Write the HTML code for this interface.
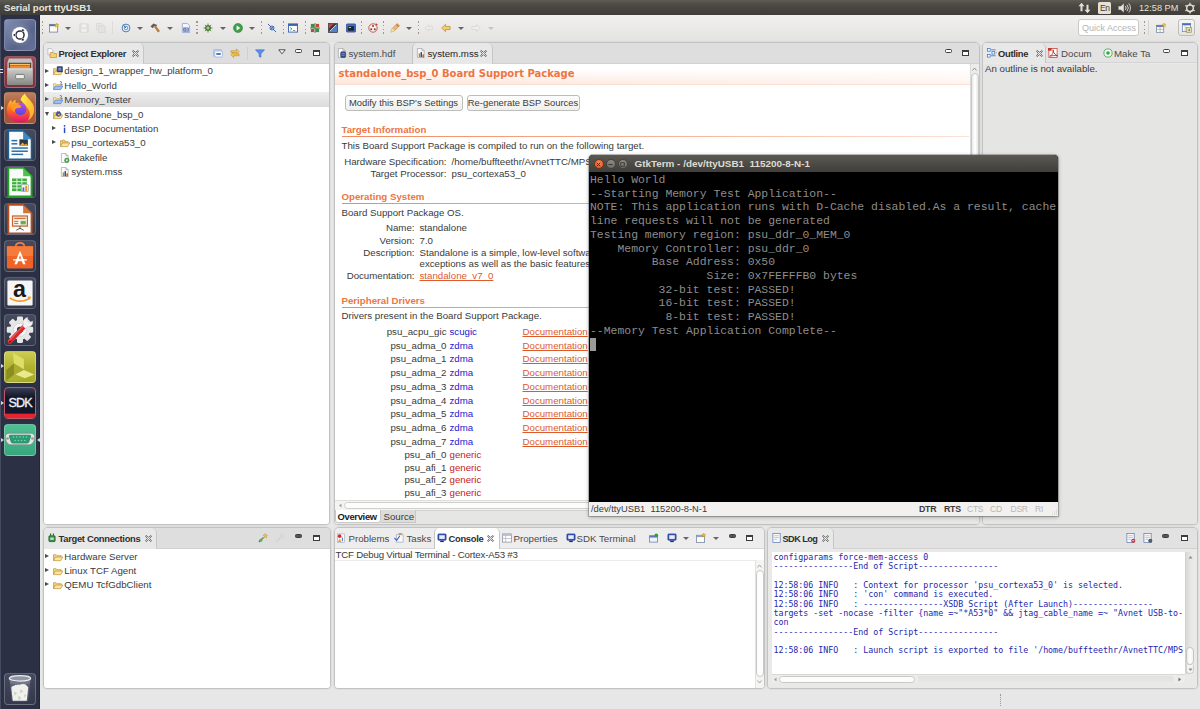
<!DOCTYPE html>
<html lang="en">
<head>
<meta charset="utf-8">
<title>Serial port ttyUSB1</title>
<style>
*{box-sizing:border-box;margin:0;padding:0}
html,body{width:1200px;height:709px;overflow:hidden}
body{position:relative;background:#e7e7e7;font-family:"Liberation Sans","DejaVu Sans",sans-serif;font-size:9.7px;color:#3a3a3a;line-height:1}
.abs{position:absolute}
.t{position:absolute;white-space:pre;line-height:12px;height:12px}
.b{font-weight:bold}
/* top panel */
#top{position:absolute;left:0;top:0;width:1200px;height:15px;background:linear-gradient(#5d5b54 0,#4a4944 35%,#3e3d39 100%);color:#e6e1d6}
#top .ttl{position:absolute;left:4px;top:1px;font-weight:bold;font-size:9.6px;line-height:13px;color:#e9e5db}
/* launcher */
#launcher{position:absolute;left:0;top:15px;width:40px;height:694px;background:#2b3044;border-right:1px solid #222738;border-left:1px solid #454b60}
.li{position:absolute;left:3px;width:32px;height:32px;border-radius:4px;border:1px solid rgba(255,255,255,.18);overflow:hidden}
/* panels */
.panel{position:absolute;border:1px solid #c2c2c2;border-radius:5px 5px 4px 4px;background:#e9e9e8;overflow:hidden;box-shadow:0 0 0 1px rgba(0,0,0,.035)}
.panel .body{position:absolute;left:0;right:0;bottom:0;background:#fff}
.tab{position:absolute;top:0;height:21px;background:#e8e8e8;border-right:1px solid #c6c6c6;border-radius:0 5px 0 0}

.hdr{position:absolute;left:0;top:0;right:0;height:21px;background:#dedede;border-bottom:1px solid #d1d1d1}
.tabtxt{position:absolute;top:4.5px;line-height:12px;white-space:pre;color:#4a4a4a}
.tabtxt.act{color:#2e2e2e;font-weight:bold;font-size:9.4px;letter-spacing:-.3px}
.row{position:absolute;left:0;right:0;height:14px}
.row .t{top:1px}
.tri{position:absolute;width:0;height:0}
.tri.r{border-left:4px solid #4a4a4a;border-top:2.5px solid transparent;border-bottom:2.5px solid transparent;margin:1px 0 0 -2px}
.tri.d{border-top:4px solid #4a4a4a;border-left:2.5px solid transparent;border-right:2.5px solid transparent;margin-left:-1px}
.ic{position:absolute;width:10px;height:10px}
.or{color:#ee7541}
.lnk{color:#dd5a2c;text-decoration:underline}
.bl{color:#2020cc}
.rd{color:#c8171f}
.sec{position:absolute;left:7px;font-weight:bold;color:#ee7541;font-size:9.7px;line-height:12px;white-space:pre}
.secline{position:absolute;left:7px;height:1px;background:linear-gradient(90deg,#f08a5d,#f5a988 40%,#fbe2d8)}
.btn{position:absolute;font-size:9.4px;height:16px;border:1px solid #bdbdbc;border-radius:3px;background:linear-gradient(#fdfdfd,#efefee);line-height:14px;text-align:center;color:#3a3a3a;white-space:pre}
.mm{position:absolute;top:6px}
.mini{position:absolute;width:7px;height:3.5px;border:1.2px solid #3c3c3c;border-radius:1.5px;background:#fff}
.maxi{position:absolute;width:7px;height:6.5px;margin:-.5px 0 0 .5px;border:1px solid #3c3c3c;border-top-width:2px;background:#fff}

.lab{position:absolute;white-space:pre;line-height:12px;text-align:right}
.val{position:absolute;white-space:pre;line-height:12px}
.sb{position:absolute;background:#f3f3f2;border:1px solid #c8c8c7;border-radius:4px}

.log{position:absolute;left:5.4px;white-space:pre;font-family:"DejaVu Sans Mono","Liberation Mono",monospace;font-size:8.3px;line-height:9.33px;color:#2626b0}

#gt{position:absolute;left:589px;top:155px;width:468.5px;height:360.5px;box-shadow:0 1px 4px rgba(0,0,0,.32),0 0 0 1px rgba(70,70,65,.3);border-radius:4px 4px 0 0;background:#000;overflow:hidden}
#gt .tb{position:absolute;left:0;top:0;right:0;height:17px;background:linear-gradient(#5b5952,#3f3e3a);border-radius:4px 4px 0 0}
#gt .tt{position:absolute;left:45.5px;top:2px;line-height:13px;font-weight:bold;font-size:9.9px;color:#dfdbd2;white-space:pre}
#gt .wb{position:absolute;top:4px;width:10px;height:10px;border-radius:50%}
#gt pre{position:absolute;left:1px;top:18px;font-family:"Liberation Mono","DejaVu Sans Mono",monospace;font-size:11.43px;line-height:13.7px;color:#8d8d8d;white-space:pre}
#gt .st{position:absolute;left:0;right:0;bottom:0;height:14px;background:#f2f1f0;color:#3c3c3c}
#gt .st span{position:absolute;top:1px;line-height:12px;white-space:pre}

.li svg{position:absolute;left:-1px;top:-1px;width:32px;height:32px}
.dk{background:linear-gradient(#454a5e,#33384b)}
.pip{position:absolute;left:0;width:0;height:0;border-left:3px solid #d8d8d8;border-top:2.5px solid transparent;border-bottom:2.5px solid transparent}

.tbi{position:absolute;top:23px;width:10px;height:10px;margin-left:.5px;opacity:.92}
.dd{position:absolute;top:26.5px;width:0;height:0;border-top:3.5px solid #666;border-left:3px solid transparent;border-right:3px solid transparent;margin-left:-.5px}
.dsep{position:absolute;top:20.5px;width:1.4px;height:13.5px;background:repeating-linear-gradient(#a5977a 0,#a5977a 1.7px,transparent 1.7px,transparent 3.8px)}
.pi{position:absolute;width:11px;height:11px}
#co .hdr{background:#ededed;border-bottom-color:#d6d6d6}
.row svg{width:10px!important;height:10px!important;margin:.5px 0 0 -.4px}
.row .t{margin-left:-.7px}
#ol .hdr{background:#e3e3e3;border-bottom-color:#d4d4d4;height:20px}
#ol .tab{height:20px}
#sl .hdr{background:#e2e2e2}
.panel>svg[viewBox="0 0 11 11"]{width:10px!important;height:10px!important;margin:.6px 0 0 .5px}
</style>
</head>
<body>
<div id="top"><div class="ttl">Serial port ttyUSB1</div>
<svg class="abs" style="left:1078px;top:2px;width:13px;height:12px" viewBox="0 0 13 12"><path d="M3.5 .8l3 3.400h-2v5h-2v-5h-2z" fill="#e6e1d6"/><path d="M9.5 11.200l-3-3.400h2v-5h2v5h2z" fill="#e6e1d6"/></svg>
<div class="abs" style="left:1098px;top:2px;width:13px;height:12px;background:#e6e1d6;border-radius:1.5px"></div>
<div class="t" style="left:1100px;top:2px;color:#3c3b37;font-size:8.5px;letter-spacing:-.3px">En</div>
<svg class="abs" style="left:1118px;top:2px;width:14px;height:12px" viewBox="0 0 14 12"><path d="M.5 4.200h2.300l3-2.700v9l-3-2.700h-2.300z" fill="#e6e1d6"/><path d="M7.300 4a3 3 0 0 1 0 4M9 2.800a5 5 0 0 1 0 6.400M10.800 1.5a7 7 0 0 1 0 9" fill="none" stroke="#e6e1d6" stroke-width=".9"/></svg>
<div class="t" style="left:1139px;top:2px;color:#e6e1d6;font-size:9.2px">12:58 PM</div>
<svg class="abs" style="left:1184px;top:2px;width:12px;height:12px" viewBox="0 0 12 12"><g transform="translate(6 6.200)" stroke="#e6e1d6" fill="none"><circle r="3.300" stroke-width="1.400"/><path d="M0-5.5v3" stroke-width="1.300"/><g stroke-width="1.5"><path d="M-4.600-2.700l1.200.7M4.600-2.700l-1.200.7M-4.600 2.700l1.200-.7M4.600 2.700l-1.200-.7M0 5.300v-1.400"/></g></g></svg>
</div>
<div id="launcher">
<div class="li" style="top:3.7px;background:radial-gradient(circle at 50% 50%,rgba(255,255,255,.18) 0,rgba(255,255,255,.06) 45%,rgba(255,255,255,0) 60%),linear-gradient(135deg,#838fb3,#58648a 60%,#66729a)"><svg viewBox="0 0 33 33"><circle cx="16.5" cy="16.5" r="8.3" fill="#fff"/><circle cx="16.5" cy="16.5" r="4.2" fill="none" stroke="#2c2c3a" stroke-width="1.5"/><circle cx="10.8" cy="16.5" r="1.4" fill="#2c2c3a" stroke="#fff" stroke-width=".5"/><circle cx="19.4" cy="11.6" r="1.4" fill="#2c2c3a" stroke="#fff" stroke-width=".5"/><circle cx="19.4" cy="21.4" r="1.4" fill="#2c2c3a" stroke="#fff" stroke-width=".5"/></svg></div>
<div class="li" style="top:40.6px;background:linear-gradient(#9e4c56,#883a44 40%,#80323c)"><svg viewBox="0 0 33 33"><defs><linearGradient id="cab" x1="0" y1="0" x2="0" y2="1"><stop offset="0" stop-color="#cdcdcb"/><stop offset="1" stop-color="#868684"/></linearGradient></defs><path d="M5 2.5h23l1.5 4.5v21.5a1.5 1.5 0 0 1-1.5 1.5h-23a1.5 1.5 0 0 1-1.5-1.5v-21.5z" fill="#c2c2c0"/><rect x="5" y="7" width="23" height="6" fill="#3a3632"/><rect x="6" y="8" width="21" height="1.600" fill="#fbbf6a"/><rect x="6" y="9.800" width="21" height="3" fill="#f08a2c"/><rect x="3.5" y="12.800" width="26" height="17.2" rx="1.5" fill="url(#cab)"/><rect x="3.5" y="12.800" width="26" height="1" fill="#e2e2e0"/><rect x="12" y="19" width="9" height="4.5" rx="1" fill="#ececea" stroke="#6e6e6c" stroke-width=".9"/></svg></div>
<div class="li" style="top:77.4px;background:linear-gradient(#bd7e5e,#aa5c3a 45%,#a25636)"><svg viewBox="0 0 33 33"><defs><linearGradient id="ffA" x1="0" y1="0" x2="0" y2="1"><stop offset="0" stop-color="#ffc42e"/><stop offset=".45" stop-color="#ff6a22"/><stop offset="1" stop-color="#e30f73"/></linearGradient><linearGradient id="ffB" x1="0" y1="0" x2="0" y2="1"><stop offset="0" stop-color="#c04af0"/><stop offset="1" stop-color="#4a4ae0"/></linearGradient><linearGradient id="ffC" x1="0" y1="0" x2="1" y2="1"><stop offset="0" stop-color="#fff24a"/><stop offset="1" stop-color="#ffa62a"/></linearGradient></defs><path d="M16.5 31.5c-8 0-13.5-6-13.5-13 0-5.5 2.5-9 4.5-10.5 0 1.5.5 2.5 1 3 1-2 3-3 4-3-1 1-1 2.5 0 3.5 3-1.5 6 .5 8 3l9-3c1 2.5 1.5 5 1.5 7 0 7-6 13-14.5 13z" fill="url(#ffA)"/><path d="M17 8c1-3 3-5 4.5-6.5 1 3 3 4 5 6.5 2.5 3 4.5 6 4.5 10.5 0 5-3 9-6.5 11 3-4 3-10-1-14-2-2-4.5-5.5-6.5-7.5z" fill="url(#ffC)"/><circle cx="17" cy="17.5" r="6.2" fill="url(#ffB)"/><path d="M6.5 14c3-2.2 7.5-2.2 10.5-.2 1.5 1 0 2.700-2 2.700-3 0-4.5 2-4 4.5-2-1-4-3.5-4.5-7z" fill="#ff9a1e"/></svg></div>
<div class="li dk" style="top:114.3px;"><svg viewBox="0 0 33 33"><g transform="translate(-4.8 -1.3) scale(1.09)"><path d="M8.5 3h14l8 8v19h-22z" fill="#fbfbfb" stroke="#1f5f8f" stroke-width="1.600"/><path d="M22.5 3l8 8h-8z" fill="#3a8ac4"/><rect x="19" y="11" width="8" height="6" fill="#2a3a4a"/><path d="M19 17l3-3 2 2 1.5-1 1.5 2z" fill="#e8a82a"/><rect x="11.5" y="11.5" width="5.5" height="1.400" fill="#2a6fa8"/><rect x="11.5" y="14.5" width="5.5" height="1.400" fill="#2a6fa8"/><rect x="11.5" y="18.5" width="15.5" height="1.400" fill="#2a6fa8"/><rect x="11.5" y="21.5" width="15.5" height="1.400" fill="#2a6fa8"/><rect x="11.5" y="24.5" width="11" height="1.400" fill="#2a6fa8"/></g></svg></div>
<div class="li dk" style="top:151.2px;"><svg viewBox="0 0 33 33"><g transform="translate(-4.8 -1.3) scale(1.09)"><path d="M8.5 3h14l8 8v19h-22z" fill="#fbfbfb" stroke="#22a022" stroke-width="1.800"/><path d="M22.5 3l8 8h-8z" fill="#4cc44c"/><rect x="12" y="13" width="14" height="12" fill="#3cb03c"/><path d="M12 16h14M12 19h14M12 22h14M16.600 13v12M21.300 13v12" stroke="#eaf8ea" stroke-width=".9"/><rect x="21" y="19" width="6.5" height="6.5" fill="#f4f4f4" stroke="#888" stroke-width=".5"/><rect x="22" y="21.5" width="1.600" height="3.5" fill="#2a6fd0"/><rect x="24.5" y="20" width="1.800" height="5" fill="#f0902a"/></g></svg></div>
<div class="li dk" style="top:188.0px;"><svg viewBox="0 0 33 33"><g transform="translate(-4.8 -1.3) scale(1.09)"><path d="M8.5 3h14l8 8v19h-22z" fill="#fbfbfb" stroke="#b4501c" stroke-width="1.800"/><path d="M22.5 3l8 8h-8z" fill="#d8763a"/><rect x="12.5" y="13.5" width="14" height="9.5" fill="#fff" stroke="#c8622a" stroke-width="1.200"/><rect x="14" y="15" width="11" height="1.5" fill="#d8763a"/><rect x="14" y="18" width="4" height="1.200" fill="#d8763a"/><rect x="14" y="20" width="4" height="1.200" fill="#d8763a"/><rect x="20" y="18" width="5" height="3.5" fill="#6ab04a"/><path d="M19.5 23v3M16 27l3.5-2 3.5 2" stroke="#555" stroke-width=".9" fill="none"/></g></svg></div>
<div class="li dk" style="top:224.9px;"><svg viewBox="0 0 33 33"><path d="M12 7c0-5.5 9-5.5 9 0" fill="none" stroke="#ee7b45" stroke-width="1.800"/><path d="M3 6.5h27v21.5a1.5 1.5 0 0 1-1.5 1.5h-24a1.5 1.5 0 0 1-1.5-1.5z" fill="#ef6426"/><path d="M3 6.5h27v10h-27z" fill="#f37b3b"/><path d="M16.5 11l5.800 14h-2.700l-1.200-3h-3.800l-1.200 3h-2.700zm0 4.5l-1.200 3.800h2.400z" fill="#fff"/><rect x="9.5" y="19.800" width="14" height="1.400" fill="#fff"/></svg></div>
<div class="li dk" style="top:261.8px;"><svg viewBox="0 0 33 33"><rect x="3.5" y="3.5" width="26" height="26" rx="1.5" fill="#f6f6f6"/><text x="16" y="20.5" text-anchor="middle" font-family="Liberation Sans,sans-serif" font-weight="bold" font-size="24" fill="#1a1a1a">a</text><path d="M6 21.5c6 4.5 15 4.5 21 0" fill="none" stroke="#f79a1e" stroke-width="1.700"/><path d="M24 20.300l3.800-.3-1 3.5z" fill="#f79a1e"/></svg></div>
<div class="li dk" style="top:298.7px;"><svg viewBox="0 0 33 33"><g transform="translate(16.5 16.3)"><g fill="#e6e6e6"><circle r="10.3"/><rect id="gth" x="-3.1" y="-13.6" width="6.2" height="27.2" rx="1.2"/><use href="#gth" transform="rotate(45)"/><use href="#gth" transform="rotate(90)"/><use href="#gth" transform="rotate(135)"/></g><circle r="6.8" fill="#f6f6f6" stroke="#d2d2d2" stroke-width=".8"/><circle r="3.2" fill="#30354a"/></g><path d="M6 28.5l16.5-17.5" stroke="#d9282c" stroke-width="4.6" stroke-linecap="round"/><path d="M6 28.5l16.5-17.5" stroke="#f0605a" stroke-width="1.2" stroke-linecap="round" transform="translate(-.9 -.9)"/><circle cx="6.2" cy="28.3" r="1" fill="#6e0e10"/><path d="M20 10.5c-1-3 1-6.5 4.5-7l-.5 3.5 2.5 2 3-1.8c.8 3.5-2 6.5-5 6l-2 2-3-2.700z" fill="#f2f2f2" stroke="#c8c8c8" stroke-width=".5"/></svg></div>
<div class="li" style="top:335.5px;background:linear-gradient(#cccd52,#b0b22e 50%,#a6a828);border-color:rgba(255,255,255,.3)"><svg viewBox="0 0 33 33"><path d="M9.200 2.100l11.300 6.200v10.800l-10.200-6.200z" fill="#dcde68"/><path d="M2.400 19.600l7.900-6.700v11.300l-7.900 6.700z" fill="#8b8e1e"/><path d="M10.300 12.900l10.200 6.200v.5l-9 4.600h-1.200z" fill="#a9ac30"/><path d="M11.500 24.200l9-4.600 10.700 4.600-9.600 3.900z" fill="#e9ea8c"/><path d="M2.400 30.900l7.900-6.700h1.200l10.100 3.900-8 3z" fill="#b4b63a" opacity=".55"/></svg></div>
<div class="li" style="top:372.4px;background:linear-gradient(#3a3e55 0,#14172a 30%,#14172a 100%);border-color:#c2576a"><svg viewBox="0 0 33 33"><rect x="0" y="27.5" width="33" height="5.5" fill="#e8242e"/><text x="16.7" y="20.4" text-anchor="middle" font-family="Liberation Sans,sans-serif" font-size="13" letter-spacing="-.8" fill="#f2f2f2" stroke="#f2f2f2" stroke-width=".35">SDK</text></svg></div>
<div class="li" style="top:409.3px;background:linear-gradient(#4fbf94,#38a67c);border-color:rgba(255,255,255,.25)"><svg viewBox="0 0 33 33"><g transform="translate(-2 0) scale(1.12 1)"><path d="M3 12.5c0-2 2-3 4-3h19c2 0 4 1 4 3v1c0 4-2 8-5 8h-17c-3 0-5-4-5-8z" fill="#e4e4e2" stroke="#8a8a88" stroke-width=".8"/><path d="M8 11h17c1.5 0 2 1 1.700 2l-1.700 5.5c-.3 1-1 1.5-2 1.5h-13c-1 0-1.700-.5-2-1.5l-1.700-5.5c-.3-1 .2-2 1.700-2z" fill="#2a9a72"/><g fill="#7ad0b0"><circle cx="10.5" cy="13.5" r=".8"/><circle cx="13.5" cy="13.5" r=".8"/><circle cx="16.5" cy="13.5" r=".8"/><circle cx="19.5" cy="13.5" r=".8"/><circle cx="22.5" cy="13.5" r=".8"/><circle cx="12" cy="17" r=".8"/><circle cx="15" cy="17" r=".8"/><circle cx="18" cy="17" r=".8"/><circle cx="21" cy="17" r=".8"/></g><circle cx="5" cy="15" r="1.300" fill="#9a9a98"/><circle cx="28" cy="15" r="1.300" fill="#9a9a98"/></g></svg></div>
<div class="li dk" style="top:658px;border-color:rgba(255,255,255,.22)"><svg viewBox="0 0 33 33"><path d="M5.5 5h22l-2.5 23a2 2 0 0 1-2 1.5h-13a2 2 0 0 1-2-1.5z" fill="#7a8092" opacity=".5"/><path d="M7.5 15c1-2.5 3-1 4-3 1.5 1.5 3-1.5 4.5.5 1.5-2 3.5-.5 4.5-1.5 1.5.5 3 1.5 4.5 4l-1.5 13.5h-14.5z" fill="#f0f0ec"/><path d="M10 19l3.5 1.5-2.5 3zM17 16.5l3 2.5-3.5 2zM14.5 23.5l3.5 2-3 2.5zM20.5 22l2.5 1-2 2.5z" fill="#cfcfc9"/><path d="M5.5 5h22l-.6 5.5c-6 2-14 2-20.8 0z" fill="#9aa0b0" opacity=".35"/><ellipse cx="16.5" cy="5.5" rx="11" ry="2.8" fill="#9096a6" stroke="#ececec" stroke-width="1.3"/></svg></div>
<i class="pip" style="top:90.9px"></i><i class="pip" style="top:349.0px"></i><i class="pip" style="top:385.9px"></i><i class="pip" style="top:422.8px"></i><i class="pip" style="top:422.8px;left:36px;border-left:0;border-right:3px solid #d8d8d8"></i><div class="abs" style="left:-1px;top:54px;width:3px;height:1.3px;background:#ddd"></div><div class="abs" style="left:-1px;top:56.8px;width:3px;height:1.3px;background:#ddd"></div></div>

<!-- toolbar -->
<div class="abs" style="left:40px;top:15px;width:1160px;height:27px;background:linear-gradient(#f1f0ee,#e3e3e2)"></div>
<i class="dsep" style="left:42.0px"></i>
<svg class="tbi" style="left:48.0px;" viewBox="0 0 11 11"><rect x=".5" y="1.5" width="9" height="8.5" fill="#fdfdf4" stroke="#6a7a9a" stroke-width=".9"/><rect x=".5" y="1.5" width="9" height="2" fill="#4a6ab0"/><path d="M8.5 0l.8 1.600 1.700.3-1.200 1.200.3 1.700-1.600-.8-1.5.8.300-1.700-1.200-1.200 1.700-.3z" fill="#f4c430" stroke="#b8860b" stroke-width=".4"/></svg>
<i class="dd" style="left:65.5px"></i>
<svg class="tbi" style="left:78.2px;" viewBox="0 0 11 11"><path d="M1 1h8l1 1v8h-9z" fill="#e2e2e2" stroke="#cfcfcf" stroke-width=".8"/><rect x="3" y="1.5" width="5" height="3" fill="#f2f2f2"/><rect x="2.5" y="6.5" width="6" height="3.5" fill="#efefef"/></svg>
<svg class="tbi" style="left:95.3px;" viewBox="0 0 11 11"><path d="M.5 .5h6l1 1v6h-7z" fill="#e6e6e6" stroke="#d2d2d2" stroke-width=".7"/><path d="M3 3h6l1 1v6.5h-7z" fill="#e2e2e2" stroke="#cfcfcf" stroke-width=".7"/></svg>
<div class="abs" style="left:112px;top:21px;width:1px;height:13px;background:#dcdcdb"></div>
<svg class="tbi" style="left:120.3px;" viewBox="0 0 11 11"><circle cx="5.5" cy="5.5" r="4.300" fill="#eef4fb" stroke="#3c78b4" stroke-width="1.100"/><circle cx="5.5" cy="5.5" r="2" fill="none" stroke="#3c78b4" stroke-width=".9"/><path d="M5.5 5.5l-3-3.5" stroke="#2a5a94" stroke-width="1"/></svg>
<i class="dd" style="left:137.8px"></i>
<svg class="tbi" style="left:149.8px;" viewBox="0 0 11 11"><path d="M.5 3.800l3.200-3.300 4.300 1.700-1.300 1.700-1.700-.5-2 2.400z" fill="#555"/><path d="M4.300 4.200l2-1.500 4.700 6-2.200 1.800z" fill="#b8722e"/></svg>
<i class="dd" style="left:167.8px"></i>
<svg class="tbi" style="left:180.3px;" viewBox="0 0 11 11"><path d="M1.5 .5h5.5l2.5 2.5v7.5h-8z" fill="#f4f8ff" stroke="#7a96c8" stroke-width=".8"/><rect x="2.5" y="5" width="6" height="4.5" fill="#3a5aa8"/><path d="M4 6v2.5M5.5 6v2.5h1.5v-2.5z" stroke="#fff" stroke-width=".6" fill="none"/></svg>
<i class="dsep" style="left:196.3px"></i>
<svg class="tbi" style="left:202.0px;" viewBox="0 0 11 11"><circle cx="5.5" cy="5.5" r="2.800" fill="#5a9a3a" stroke="#2f5a24" stroke-width=".8"/><path d="M5.5 .5v10M.5 5.5h10M2 2l7 7M9 2l-7 7" stroke="#2f5a24" stroke-width=".8"/><circle cx="5.5" cy="5.5" r="1.600" fill="#8fd06a"/></svg>
<i class="dd" style="left:220.0px"></i>
<svg class="tbi" style="left:232.0px;" viewBox="0 0 11 11"><circle cx="5.5" cy="5.5" r="5" fill="#2f9a3a" stroke="#1f7a2a" stroke-width=".6"/><path d="M4 2.800l4 2.700-4 2.700z" fill="#fff"/></svg>
<i class="dd" style="left:249.5px"></i>
<i class="dsep" style="left:260.5px"></i>
<svg class="tbi" style="left:266.5px;" viewBox="0 0 11 11"><path d="M1 1l9 9" stroke="#3a5aa8" stroke-width="1.1"/><circle cx="5.5" cy="5.5" r="2.3" fill="#6aa2dc" stroke="#2a4a98" stroke-width=".7"/><path d="M3.5 7.5l4-4" stroke="#2a4a98" stroke-width=".6"/></svg>
<i class="dsep" style="left:282.5px"></i>
<svg class="tbi" style="left:287.5px;" viewBox="0 0 11 11"><rect x=".5" y="1" width="10" height="9" fill="#fff" stroke="#2a5aa0" stroke-width="1"/><rect x=".5" y="1" width="10" height="2.200" fill="#2a5aa0"/><path d="M2.5 5l1.800 1.5-1.800 1.5" stroke="#2a5aa0" stroke-width=".9" fill="none"/><path d="M5.5 8.300h2.5" stroke="#2a5aa0" stroke-width=".8"/></svg>
<i class="dsep" style="left:304.5px"></i>
<svg class="tbi" style="left:309.5px;" viewBox="0 0 11 11"><rect x="1" y="1" width="4" height="4" fill="#2a8a3a"/><rect x="6" y="6" width="4" height="4" fill="#2a8a3a"/><rect x="6.5" y="1" width="3.5" height="3.5" fill="#c0392b"/><rect x="1" y="6.5" width="3.5" height="3.5" fill="#c0392b"/><path d="M0 5.5h11M5.5 0v11" stroke="#1a5a2a" stroke-width=".8"/></svg>
<svg class="tbi" style="left:327.0px;" viewBox="0 0 11 11"><rect x=".5" y=".5" width="10" height="10" fill="#2a2a3a" stroke="#1a1a2a" stroke-width=".6"/><path d="M1 10l9-9v9z" fill="#4a78c8"/><path d="M1 1h5l-5 5z" fill="#c0392b"/><path d="M2 9l7-7" stroke="#eee" stroke-width=".9"/></svg>
<svg class="tbi" style="left:345.2px;" viewBox="0 0 11 11"><rect x=".5" y="1" width="10" height="9" rx="1" fill="#2a6ad0" stroke="#1a3a80" stroke-width=".8"/><rect x="2" y="3.5" width="7" height="5" fill="#10141c"/><rect x="3" y="4.5" width="2.5" height=".9" fill="#ddd"/></svg>
<i class="dsep" style="left:361.0px"></i>
<svg class="tbi" style="left:367.0px;" viewBox="0 0 11 11"><circle cx="5.5" cy="5.5" r="4.600" fill="#fdf2f2" stroke="#c0392b" stroke-width="1"/><circle cx="5.5" cy="3.300" r="1.100" fill="#7a2a2a"/><circle cx="3.600" cy="6.800" r="1.100" fill="#7a2a2a"/><circle cx="7.400" cy="6.800" r="1.100" fill="#7a2a2a"/><path d="M8.5 0l2.5 2-2.5 1z" fill="#c0392b"/></svg>
<i class="dsep" style="left:383.0px"></i>
<svg class="tbi" style="left:389.0px;" viewBox="0 0 11 11"><path d="M1 10l1.5-4 5.5-5.5 2.5 2.5-5.5 5.5z" fill="#e8b86a" stroke="#a8782a" stroke-width=".6"/><path d="M1 10l1.5-4 2.5 2.5z" fill="#f4e2b8"/><path d="M7 1.5l2.5 2.5" stroke="#c8641e" stroke-width="1.200"/></svg>
<i class="dd" style="left:406.5px"></i>
<i class="dsep" style="left:417.5px"></i>
<svg class="tbi" style="left:423.2px;" viewBox="0 0 11 11"><path d="M1 5.5l4-3.5v2h4.5v3h-4.5v2z" fill="#ececec" stroke="#d4d4d4" stroke-width=".7"/><path d="M8 1l.6 1.200 1.300.2-1 .9.300 1.300-1.200-.7" fill="#e0e0e0"/></svg>
<svg class="tbi" style="left:440.5px;" viewBox="0 0 11 11"><path d="M.8 5.5l4.200-4v2.300h5v3.400h-5v2.300z" fill="#f6cf5a" stroke="#b8862a" stroke-width=".8"/></svg>
<i class="dd" style="left:458.5px"></i>
<svg class="tbi" style="left:470.5px;" viewBox="0 0 11 11"><path d="M10.200 5.5l-4.200-4v2.300h-5v3.400h5v2.300z" fill="#efefef" stroke="#d2d2d2" stroke-width=".8"/></svg>
<i class="dd" style="left:488.5px;border-top-color:#c4c4c4"></i>
<div class="abs" style="left:1078px;top:19px;width:61px;height:17px;background:#fff;border:1px solid #c9c9c8;border-radius:3px"></div>
<div class="t" style="left:1082px;top:22px;color:#b4b4b4;font-size:9px">Quick Access</div>
<i class="dsep" style="left:1144.0px"></i>
<div class="abs" style="left:1148px;top:20px;width:1px;height:15px;background:#d4d4d3"></div>
<svg class="tbi" style="left:1155.0px;" viewBox="0 0 11 11"><rect x=".5" y="2.5" width="8" height="8" fill="#fdfdf0" stroke="#6a7a9a" stroke-width=".8"/><rect x=".5" y="2.5" width="8" height="1.800" fill="#4a6ab0"/><path d="M4.5 4.300v6M.5 7h8" stroke="#8a9ab8" stroke-width=".7"/><path d="M8.800 0l.7 1.400 1.5.2-1.100 1 .3 1.5-1.400-.7-1.300.7.300-1.5-1.100-1 1.5-.2z" fill="#f4c430" stroke="#b8860b" stroke-width=".4"/></svg>
<div class="abs" style="left:1178px;top:19px;width:17px;height:17px;border:1px solid #bdbdbc;border-radius:3px;background:linear-gradient(#f6f6f5,#e4e4e3)"></div>
<svg class="tbi" style="left:1181.0px;" viewBox="0 0 11 11"><rect x=".5" y=".5" width="9" height="9" fill="#fff" stroke="#5a7ab0" stroke-width=".8"/><rect x=".5" y=".5" width="9" height="2" fill="#3a62b0"/><path d="M3.5 2.5v7" stroke="#8a9ab8" stroke-width=".7"/><rect x="5" y="5" width="5.5" height="5.5" fill="#e8d8a0" stroke="#8a7a3a" stroke-width=".6"/><path d="M6.5 7.800l2-1.300v2.600z" fill="#2a5ab0"/></svg>
<!-- Project Explorer -->
<div class="panel" id="pe" style="left:43px;top:42px;width:287px;height:483px">
  <div class="hdr"></div>
  <div class="tab" style="left:0;width:100px"></div>
  <div class="tabtxt act" style="left:14.5px">Project Explorer</div>
  <svg class="abs" style="left:87.5px;top:6.7px;width:7px;height:7px" viewBox="0 0 8 8"><path d="M1.300 .5l2.700 2.200 2.700-2.200.8.800-2.200 2.700 2.200 2.700-.8.800-2.700-2.200-2.700 2.200-.8-.8 2.200-2.700-2.200-2.700z" fill="#f4f4f4" stroke="#3c3c3c" stroke-width=".8"/></svg>
  <svg class="abs" style="left:2px;top:4px;width:11px;height:11px" viewBox="0 0 11 11"><path d="M1 .5h3.5l2 2v5h-5.5z" fill="#fbfbfb" stroke="#a8a8b8" stroke-width=".7"/><path d="M3.5 5h3l1 1h3v4.5h-7z" fill="#f7d070" stroke="#b88a2a" stroke-width=".7"/></svg>
  <svg class="abs" style="left:169px;top:6px;width:10px;height:9px" viewBox="0 0 10 9"><rect x=".5" y=".5" width="8" height="7" rx="1" fill="#c4d8f4" stroke="#9ab4e0" stroke-width=".7"/><rect x="1.8" y="2" width="7.5" height="6" rx=".8" fill="#fff" stroke="#8aa8dc" stroke-width=".7"/><path d="M3.3 5h4.5" stroke="#2a4a98" stroke-width="1.3"/></svg>
  <svg class="abs" style="left:185px;top:4.5px;width:11px;height:11px" viewBox="0 0 11 11"><path d="M1 3h6v-2l3 3-3 3v-2h-6z" fill="#f4c84a" stroke="#b8862a" stroke-width=".6"/><path d="M10 8h-6v-2l-3 3 3 3v-2h6z" fill="#f4c84a" stroke="#b8862a" stroke-width=".6" transform="translate(0 -1.5)"/></svg>
  <div class="abs" style="left:203px;top:4px;width:1px;height:13px;background:#d0d0cf"></div>
  <svg class="abs" style="left:210.5px;top:6px;width:10px;height:9px" viewBox="0 0 10 9"><path d="M.5 .8h9l-3.6 4v3.5l-1.800-.8v-2.700z" fill="#5a8ee8" stroke="#3a6ad0" stroke-width=".6"/></svg>
  <svg class="abs" style="left:234px;top:6px;width:8px;height:6px" viewBox="0 0 8 6"><path d="M.8 .8h6.400l-3.200 4z" fill="#fff" stroke="#3c3c3c" stroke-width=".9"/></svg>
  <div class="mini" style="left:251px;top:6px"></div>
  <div class="maxi" style="left:268px;top:7px"></div>
  <div class="body" style="top:21px">
    <div class="row" style="top:0"><i class="tri r" style="left:3px;top:4px"></i><svg class="abs" style="left:9px;top:1.5px;width:11px;height:11px" viewBox="0 0 11 11"><path d="M.5 9.5v-6.5h3l1 1h4.5v1.5" fill="#f4d488" stroke="#b88a2a" stroke-width=".7"/><path d="M.5 9.5l2-4h8.300l-2.300 4z" fill="#fbe4a4" stroke="#b88a2a" stroke-width=".7"/><rect x="4.5" y=".5" width="6" height="6" rx=".8" fill="#3a4a8a" stroke="#1a2a5a" stroke-width=".5"/><rect x="6" y="2" width="3" height="3" fill="#7a8ac8"/></svg><span class="t" style="left:21px">design_1_wrapper_hw_platform_0</span></div>
    <div class="row" style="top:15px"><i class="tri r" style="left:3px;top:3px"></i><svg class="abs" style="left:9px;top:1.5px;width:11px;height:11px" viewBox="0 0 11 11"><path d="M.5 9v-6h3l1 1h4.5v1.5" fill="#f8e4a8" stroke="#c8a040" stroke-width=".7"/><path d="M.5 9.5l2-4h8.3l-2.3 4z" fill="#9cc0f4" stroke="#4a72c8" stroke-width=".7"/><path d="M7.5 .8c1.5-.6 2.5.4 1.5 1.5s0 2 1.5 1.5" fill="none" stroke="#2a4a98" stroke-width=".8"/></svg><span class="t" style="left:21px">Hello_World</span></div>
    <div class="row" style="top:28px;height:15px;background:linear-gradient(#ededed,#dcdcdc)"><i class="tri r" style="left:3px;top:4px"></i><svg class="abs" style="left:9px;top:2px;width:11px;height:11px" viewBox="0 0 11 11"><path d="M.5 9v-6h3l1 1h4.5v1.5" fill="#f8e4a8" stroke="#c8a040" stroke-width=".7"/><path d="M.5 9.5l2-4h8.3l-2.3 4z" fill="#9cc0f4" stroke="#4a72c8" stroke-width=".7"/><path d="M7.5 .8c1.5-.6 2.5.4 1.5 1.5s0 2 1.5 1.5" fill="none" stroke="#2a4a98" stroke-width=".8"/></svg><span class="t" style="left:21px;top:2px">Memory_Tester</span></div>
    <div class="row" style="top:44px"><i class="tri d" style="left:2px;top:4px"></i><svg class="abs" style="left:9px;top:1.5px;width:11px;height:11px" viewBox="0 0 11 11"><path d="M.5 9.5v-6.5h3l1 1h4.5v1.5" fill="#f4d488" stroke="#b88a2a" stroke-width=".7"/><path d="M.5 9.5l2-4h8.300l-2.300 4z" fill="#fbe4a4" stroke="#b88a2a" stroke-width=".7"/><circle cx="6" cy="4.5" r="2.600" fill="#3a62c0" stroke="#1a2a6a" stroke-width=".5"/><path d="M4.5 1l1 1.5M7.5 1l-1 1.5" stroke="#7a4a1a" stroke-width=".7"/><circle cx="6.5" cy="5" r="1" fill="#e8c84a"/></svg><span class="t" style="left:21px">standalone_bsp_0</span></div>
    <div class="row" style="top:58px"><i class="tri r" style="left:10px;top:3px"></i><svg class="abs" style="left:16px;top:1.5px;width:11px;height:11px" viewBox="0 0 11 11"><circle cx="5" cy="2" r="1" fill="#2a4ab8"/><rect x="4.200" y="4" width="1.600" height="6" fill="#2a4ab8"/></svg><span class="t" style="left:28px">BSP Documentation</span></div>
    <div class="row" style="top:72px"><i class="tri r" style="left:10px;top:3px"></i><svg class="abs" style="left:16px;top:1.5px;width:11px;height:11px" viewBox="0 0 11 11"><path d="M.5 9.5v-6.5h3l1 1h4.5v1.5" fill="#f4d488" stroke="#b88a2a" stroke-width=".7"/><path d="M.5 9.5l2-4h8.300l-2.300 4z" fill="#fbe4a4" stroke="#b88a2a" stroke-width=".7"/><circle cx="4" cy="3.5" r="1.5" fill="#f4d488" stroke="#b88a2a" stroke-width=".6"/></svg><span class="t" style="left:28px">psu_cortexa53_0</span></div>
    <div class="row" style="top:87px"><svg class="abs" style="left:16px;top:1.5px;width:11px;height:11px" viewBox="0 0 11 11"><path d="M1.5 .5h5l2.5 2.5v7.5h-7.5z" fill="#fbfbfb" stroke="#9a9a9a" stroke-width=".7"/><path d="M6.5 .5v2.5h2.5" fill="none" stroke="#9a9a9a" stroke-width=".7"/><circle cx="7.5" cy="8" r="2.5" fill="#4aaa5a" stroke="#2a7a3a" stroke-width=".5"/><circle cx="7.5" cy="8" r="1" fill="#d8f4d8"/></svg><span class="t" style="left:28px">Makefile</span></div>
    <div class="row" style="top:101px"><svg class="abs" style="left:16px;top:1.5px;width:11px;height:11px" viewBox="0 0 11 11"><path d="M1.5 .5h5l2.5 2.5v7.5h-7.5z" fill="#fbfbfb" stroke="#9a9a9a" stroke-width=".7"/><path d="M6.5 .5v2.5h2.5" fill="none" stroke="#9a9a9a" stroke-width=".7"/><rect x="3" y="6" width="1.600" height="4" fill="#b8860b"/><rect x="5" y="4.5" width="1.600" height="5.5" fill="#2a4a98"/><rect x="7" y="7" width="1.800" height="3.5" fill="#c86a1e"/></svg><span class="t" style="left:28px">system.mss</span></div>
  </div>
</div>

<!-- Editor -->
<div class="panel" id="ed" style="left:333.5px;top:42px;width:646px;height:483px">
  <div class="hdr"></div>
  <div class="tab" style="left:0;width:77px;background:transparent;border-right:0"></div>
  <div class="tab" style="left:77px;width:81px;border-left:1px solid #c2c2c1;border-radius:5px 5px 0 0"></div>
  <div class="tabtxt" style="left:14px">system.hdf</div>
  <div class="tabtxt act" style="left:93px;font-weight:normal;font-size:9.7px;letter-spacing:0;color:#1e1e1e">system.mss</div>
  <svg class="abs" style="left:145.5px;top:6.7px;width:7px;height:7px" viewBox="0 0 8 8"><path d="M1.300 .5l2.700 2.200 2.700-2.200.8.800-2.200 2.700 2.200 2.700-.8.800-2.700-2.200-2.700 2.200-.8-.8 2.200-2.700-2.200-2.700z" fill="#f4f4f4" stroke="#3c3c3c" stroke-width=".8"/></svg><svg class="abs" style="left:1.5px;top:4.5px;width:11px;height:11px" viewBox="0 0 11 11"><path d="M1.5 .5h5l2.5 2.5v7.5h-7.5z" fill="#fbfbfb" stroke="#9a9a9a" stroke-width=".7"/><path d="M6.5 .5v2.5h2.5" fill="none" stroke="#9a9a9a" stroke-width=".7"/><rect x="4" y="4" width="5.5" height="6.5" rx="1.5" fill="#3a4a8a" stroke="#1a2a5a" stroke-width=".5"/><path d="M5 6h3.5M5 8h3.5" stroke="#9ab0e0" stroke-width=".7"/></svg><svg class="abs" style="left:81px;top:4.5px;width:11px;height:11px" viewBox="0 0 11 11"><path d="M1.5 .5h5l2.5 2.5v7.5h-7.5z" fill="#fbfbfb" stroke="#9a9a9a" stroke-width=".7"/><path d="M6.5 .5v2.5h2.5" fill="none" stroke="#9a9a9a" stroke-width=".7"/><rect x="3" y="6" width="1.600" height="4" fill="#b8860b"/><rect x="5" y="4.5" width="1.600" height="5.5" fill="#2a4a98"/><rect x="7" y="7" width="1.800" height="3.5" fill="#c86a1e"/></svg>
  <div class="mini" style="left:610px;top:6px"></div>
  <div class="maxi" style="left:627px;top:7px"></div>
  <div class="body" style="top:21px">
    <div class="abs" style="left:0;top:0;width:635px;height:21px;background:linear-gradient(90deg,rgba(255,255,255,0) 0,rgba(255,255,255,.55) 100%),linear-gradient(#fff 0,#fff 25%,#fde5da 100%);border-bottom:1px solid #fcdfd3"></div>
    <div class="t or b" style="left:4px;top:3px;font-family:'DejaVu Sans','Liberation Sans',sans-serif;font-size:10px;line-height:13px;height:13px">standalone_bsp_0 Board Support Package</div>
    <div class="btn" style="left:10px;top:31px;width:118px">Modify this BSP's Settings</div>
    <div class="btn" style="left:132px;top:31px;width:113px">Re-generate BSP Sources</div>

    <div class="sec" style="top:60px">Target Information</div>
    <div class="secline" style="top:72px;width:627px"></div>
    <div class="t" style="left:7px;top:75.7px">This Board Support Package is compiled to run on the following target.</div>
    <div class="lab" style="left:0;width:112px;top:91.6px">Hardware Specification:</div>
    <div class="val" style="left:117px;top:91.6px">/home/buffteethr/AvnetTTC/MPSoC/petalinux/ultra96/Ultra96.sdk/design_1_wrapper_hw_platform_0/system.hdf</div>
    <div class="lab" style="left:0;width:112px;top:103.7px">Target Processor:</div>
    <div class="val" style="left:117px;top:103.7px">psu_cortexa53_0</div>

    <div class="sec" style="top:127px">Operating System</div>
    <div class="secline" style="top:139px;width:627px"></div>
    <div class="t" style="left:7px;top:142.7px">Board Support Package OS.</div>
    <div class="lab" style="left:0;width:80px;top:158px">Name:</div>
    <div class="val" style="left:85px;top:158px">standalone</div>
    <div class="lab" style="left:0;width:80px;top:170.7px">Version:</div>
    <div class="val" style="left:85px;top:170.7px">7.0</div>
    <div class="lab" style="left:0;width:80px;top:183px">Description:</div>
    <div class="val" style="left:85px;top:183px">Standalone is a simple, low-level software layer. It provides access to basic processor features such as caches, interrupts and</div>
    <div class="val" style="left:85px;top:194px">exceptions as well as the basic features of a hosted environment, such as standard input and output, profiling, abort and exit.</div>
    <div class="lab" style="left:0;width:80px;top:206px">Documentation:</div>
    <div class="val lnk" style="left:85px;top:206px">standalone_v7_0</div>

    <div class="sec" style="top:230.6px">Peripheral Drivers</div>
    <div class="secline" style="top:243px;width:627px"></div>
    <div class="t" style="left:7px;top:246px">Drivers present in the Board Support Package.</div>
    <div class="lab" style="left:0;width:112px;top:262px">psu_acpu_gic</div><div class="val bl" style="left:115px;top:262px">scugic</div><div class="val lnk" style="left:188px;top:262px">Documentation</div>
    <div class="lab" style="left:0;width:112px;top:276px">psu_adma_0</div><div class="val bl" style="left:115px;top:276px">zdma</div><div class="val lnk" style="left:188px;top:276px">Documentation</div>
    <div class="lab" style="left:0;width:112px;top:289px">psu_adma_1</div><div class="val bl" style="left:115px;top:289px">zdma</div><div class="val lnk" style="left:188px;top:289px">Documentation</div>
    <div class="lab" style="left:0;width:112px;top:303px">psu_adma_2</div><div class="val bl" style="left:115px;top:303px">zdma</div><div class="val lnk" style="left:188px;top:303px">Documentation</div>
    <div class="lab" style="left:0;width:112px;top:317px">psu_adma_3</div><div class="val bl" style="left:115px;top:317px">zdma</div><div class="val lnk" style="left:188px;top:317px">Documentation</div>
    <div class="lab" style="left:0;width:112px;top:331px">psu_adma_4</div><div class="val bl" style="left:115px;top:331px">zdma</div><div class="val lnk" style="left:188px;top:331px">Documentation</div>
    <div class="lab" style="left:0;width:112px;top:344px">psu_adma_5</div><div class="val bl" style="left:115px;top:344px">zdma</div><div class="val lnk" style="left:188px;top:344px">Documentation</div>
    <div class="lab" style="left:0;width:112px;top:358px">psu_adma_6</div><div class="val bl" style="left:115px;top:358px">zdma</div><div class="val lnk" style="left:188px;top:358px">Documentation</div>
    <div class="lab" style="left:0;width:112px;top:372px">psu_adma_7</div><div class="val bl" style="left:115px;top:372px">zdma</div><div class="val lnk" style="left:188px;top:372px">Documentation</div>
    <div class="lab" style="left:0;width:112px;top:385.3px">psu_afi_0</div><div class="val rd" style="left:115px;top:385.3px">generic</div>
    <div class="lab" style="left:0;width:112px;top:397.8px">psu_afi_1</div><div class="val rd" style="left:115px;top:397.8px">generic</div>
    <div class="lab" style="left:0;width:112px;top:410.3px">psu_afi_2</div><div class="val rd" style="left:115px;top:410.3px">generic</div>
    <div class="lab" style="left:0;width:112px;top:422.8px">psu_afi_3</div><div class="val rd" style="left:115px;top:422.8px">generic</div>
    <!-- editor scrollbars -->
    <div class="abs" style="left:635px;top:0;width:9px;height:436px;background:#ececeb;border-left:1px solid #dadad9"></div>
    <svg class="abs" style="left:637px;top:3px;width:5px;height:4px" viewBox="0 0 5 4"><path d="M.5 3.5l2-2.5 2 2.5" fill="none" stroke="#8a8a8a" stroke-width=".9"/></svg>
    <div class="sb" style="left:636px;top:9px;width:8px;height:106px;background:linear-gradient(90deg,#e8e8e8,#fdfdfd 40%,#fdfdfd 60%,#e4e4e4)"></div>
    <div class="abs" style="left:0;top:436px;width:644px;height:9.5px;background:#f4f4f3;border-top:1px solid #dededd"></div>
    <svg class="abs" style="left:3px;top:439px;width:4px;height:5px" viewBox="0 0 4 5"><path d="M3.5 .5l-2.5 2 2.5 2z" fill="#a0a0a0"/></svg>
    <div class="sb" style="left:9px;top:437.5px;width:420px;height:7px;background:#fcfcfc;border-color:#cfcfce"></div>
    <!-- bottom tabs -->
    <div class="abs" style="left:0;top:445.5px;width:644px;height:15px;background:#e6e6e5;border-top:1px solid #d0d0cf"></div>
    <div class="abs" style="left:0;top:445.5px;width:46px;height:13px;background:#fff;border:1px solid #c8c8c7;border-top:0;border-radius:0 0 3px 3px"></div>
    <div class="abs" style="left:46px;top:446px;width:35.5px;height:12.5px;background:#dcdcdb;border:1px solid #c8c8c7;border-top:0;border-left:0"></div>
    <div class="t" style="left:3px;top:446.5px;color:#222;font-weight:bold;font-size:9.4px;letter-spacing:-.3px">Overview</div>
    <div class="t" style="left:49px;top:446.5px">Source</div>
  </div>
</div>

<!-- Outline -->
<div class="panel" id="ol" style="left:982px;top:42px;width:216px;height:483px">
  <div class="hdr"></div>
  <div class="tab" style="left:0;width:63px"></div>
  <div class="tabtxt act" style="left:15px">Outline</div>
  <svg class="abs" style="left:52.5px;top:6.7px;width:7px;height:7px" viewBox="0 0 8 8"><path d="M1.300 .5l2.700 2.200 2.700-2.200.8.800-2.200 2.700 2.200 2.700-.8.800-2.700-2.200-2.700 2.200-.8-.8 2.200-2.700-2.200-2.700z" fill="#f4f4f4" stroke="#3c3c3c" stroke-width=".8"/></svg><svg class="abs" style="left:3px;top:4.5px;width:11px;height:11px" viewBox="0 0 11 11"><rect x=".5" y=".5" width="3" height="3" fill="#fff" stroke="#3a7ac8" stroke-width=".8"/><rect x=".5" y="7" width="3" height="3" fill="#fff" stroke="#3a7ac8" stroke-width=".8"/><rect x="5.5" y="3.700" width="3" height="3" fill="#fff" stroke="#3a7ac8" stroke-width=".8"/><path d="M4.5 2h5M9.5 5.200h1M4.5 8.5h5" stroke="#3a7ac8" stroke-width=".9"/></svg><svg class="abs" style="left:64px;top:4.5px;width:11px;height:11px" viewBox="0 0 11 11"><rect x="1" y=".5" width="9" height="10" fill="#fff" stroke="#c0392b" stroke-width=".8"/><path d="M2 9c3-1 4-4 3.5-7 .5 4 3 6 5 6.5-3-.5-6 0-8.5 .5z" fill="none" stroke="#b01a1a" stroke-width=".9"/><rect x="0" y="0" width="4" height="3" fill="#c0392b"/></svg><svg class="abs" style="left:119px;top:4.5px;width:11px;height:11px" viewBox="0 0 11 11"><circle cx="5.5" cy="5.5" r="4.5" fill="#f2fbf2" stroke="#3aa04a" stroke-width=".9"/><circle cx="5.5" cy="5.5" r="2" fill="#3aa04a"/></svg>
  <div class="tabtxt" style="left:78px">Docum</div>
  <div class="tabtxt" style="left:131px">Make Ta</div>
  <div class="mini" style="left:180px;top:6px"></div>
  <div class="maxi" style="left:197px;top:7px"></div>
  <div class="body" style="top:21px;background:#e5e5e4">
    <div class="t" style="left:2px;top:-.8px">An outline is not available.</div>
  </div>
</div>

<!-- Target Connections -->
<div class="panel" id="tc" style="left:43px;top:527px;width:288px;height:162px">
  <div class="hdr"></div>
  <div class="tab" style="left:0;width:113px"></div>
  <div class="tabtxt act" style="left:14.5px">Target Connections</div>
  <svg class="abs" style="left:101px;top:6.7px;width:7px;height:7px" viewBox="0 0 8 8"><path d="M1.300 .5l2.700 2.200 2.700-2.200.8.800-2.200 2.700 2.200 2.700-.8.800-2.700-2.200-2.700 2.200-.8-.8 2.200-2.700-2.200-2.700z" fill="#f4f4f4" stroke="#3c3c3c" stroke-width=".8"/></svg><svg class="abs" style="left:2px;top:4.5px;width:11px;height:11px" viewBox="0 0 11 11"><rect x="2" y="3" width="7" height="6.5" rx="1" fill="#3a8a4a" stroke="#1a5a2a" stroke-width=".7"/><path d="M4 3v-2.5M7 3v-2.5" stroke="#1a5a2a" stroke-width="1.100"/><rect x="3.5" y="5" width="4" height="2.5" fill="#b8e8c0"/></svg><svg class="abs" style="left:213px;top:4.5px;width:11px;height:11px" viewBox="0 0 11 11"><path d="M1 10l5-5" stroke="#5a8a4a" stroke-width="1.5"/><circle cx="3" cy="8" r="1.800" fill="#6aaa5a"/><path d="M8 .5l.8 1.600 1.700.3-1.200 1.200.3 1.700-1.600-.8-1.5.8.300-1.700-1.200-1.200 1.700-.3z" fill="#f4c430" stroke="#b8860b" stroke-width=".4"/></svg><svg class="abs" style="left:230px;top:4.5px;width:11px;height:11px" viewBox="0 0 11 11"><path d="M1 10l5-5" stroke="#cfcfcf" stroke-width="1.300"/><circle cx="3" cy="8" r="1.800" fill="#d8d8d8"/><circle cx="8" cy="3" r="2" fill="none" stroke="#cfcfcf" stroke-width=".8"/></svg>
  <div class="mini" style="left:251px;top:6px;background:#555"></div>
  <div class="maxi" style="left:268px;top:7px"></div>
  <div class="body" style="top:21px">
    <div class="row" style="top:1px"><i class="tri r" style="left:2.5px;top:3px"></i><svg class="abs" style="left:9.5px;top:1.5px;width:11px;height:11px" viewBox="0 0 11 11"><path d="M.5 9.5v-6.5h3l1 1h4.5v1.5" fill="#f4d488" stroke="#b88a2a" stroke-width=".7"/><path d="M.5 9.5l2-4h8.300l-2.300 4z" fill="#fbe4a4" stroke="#b88a2a" stroke-width=".7"/></svg><span class="t" style="left:21px">Hardware Server</span></div>
    <div class="row" style="top:15px"><i class="tri r" style="left:2.5px;top:3px"></i><svg class="abs" style="left:9.5px;top:1.5px;width:11px;height:11px" viewBox="0 0 11 11"><path d="M.5 9.5v-6.5h3l1 1h4.5v1.5" fill="#f4d488" stroke="#b88a2a" stroke-width=".7"/><path d="M.5 9.5l2-4h8.300l-2.300 4z" fill="#fbe4a4" stroke="#b88a2a" stroke-width=".7"/></svg><span class="t" style="left:21px">Linux TCF Agent</span></div>
    <div class="row" style="top:29px"><i class="tri r" style="left:2.5px;top:3px"></i><svg class="abs" style="left:9.5px;top:1.5px;width:11px;height:11px" viewBox="0 0 11 11"><path d="M.5 9.5v-6.5h3l1 1h4.5v1.5" fill="#f4d488" stroke="#b88a2a" stroke-width=".7"/><path d="M.5 9.5l2-4h8.300l-2.300 4z" fill="#fbe4a4" stroke="#b88a2a" stroke-width=".7"/></svg><span class="t" style="left:21px">QEMU TcfGdbClient</span></div>
  </div>
</div>

<!-- Console -->
<div class="panel" id="co" style="left:333.5px;top:527px;width:431.5px;height:162px">
  <div class="hdr"></div>
  <div class="tab" style="left:99.5px;width:65.5px;border-left:1px solid #c2c2c1;border-radius:5px 5px 0 0;background:#fff"></div>
  <div class="tabtxt" style="left:14px">Problems</div>
  <div class="tabtxt" style="left:72px">Tasks</div>
  <div class="tabtxt act" style="left:114px">Console</div>
  <svg class="abs" style="left:152px;top:6.7px;width:7px;height:7px" viewBox="0 0 8 8"><path d="M1.300 .5l2.700 2.200 2.700-2.200.8.800-2.200 2.700 2.200 2.700-.8.800-2.700-2.200-2.700 2.200-.8-.8 2.200-2.700-2.200-2.700z" fill="#f4f4f4" stroke="#3c3c3c" stroke-width=".8"/></svg><svg class="abs" style="left:1px;top:4.5px;width:11px;height:11px" viewBox="0 0 11 11"><rect x="1.5" y="1" width="8" height="9.5" fill="#fafafa" stroke="#a8a8b8" stroke-width=".7"/><circle cx="4" cy="3.5" r="2" fill="#d8282a"/><path d="M2 10l2-4 2 4z" fill="#e8a82a"/><path d="M7 5v4" stroke="#3a5ac0" stroke-width="1"/></svg><svg class="abs" style="left:59px;top:4.5px;width:11px;height:11px" viewBox="0 0 11 11"><rect x="2.5" y="2" width="7.5" height="8" fill="#fbfbfb" stroke="#9a9ab0" stroke-width=".7"/><path d="M.5 5.5l2.5 2.5 3.5-5" fill="none" stroke="#3a6ad0" stroke-width="1.300"/><path d="M5 1h4" stroke="#b8862a" stroke-width="1.200"/></svg><svg class="abs" style="left:102px;top:4.5px;width:11px;height:11px" viewBox="0 0 11 11"><rect x="1" y="1" width="9" height="7" rx="1" fill="#3a5ac0" stroke="#1a2a7a" stroke-width=".7"/><rect x="2.5" y="2.5" width="6" height="4" fill="#e8eefc"/><rect x="3.5" y="8.5" width="4" height="1.5" fill="#1a2a7a"/></svg><svg class="abs" style="left:167px;top:4.5px;width:11px;height:11px" viewBox="0 0 11 11"><rect x=".5" y="1" width="10" height="9" fill="#fff" stroke="#8a8a9a" stroke-width=".8"/><rect x=".5" y="1" width="10" height="2.200" fill="#b8c0d0"/><path d="M4 3v7M.5 6h10" stroke="#a8a8b8" stroke-width=".7"/></svg><svg class="abs" style="left:231px;top:4.5px;width:11px;height:11px" viewBox="0 0 11 11"><rect x="1" y="1" width="9" height="7" rx="1" fill="#3a5ac0" stroke="#1a2a7a" stroke-width=".7"/><rect x="2.5" y="2.5" width="6" height="4" fill="#e8eefc"/><rect x="3.5" y="8.5" width="4" height="1.5" fill="#1a2a7a"/></svg><svg class="abs" style="left:314px;top:4.5px;width:11px;height:11px" viewBox="0 0 11 11"><rect x=".5" y="3" width="9" height="7" fill="#eef2fa" stroke="#6a7aa8" stroke-width=".8"/><rect x=".5" y="3" width="9" height="2" fill="#5a7ac0"/><circle cx="8" cy="2.5" r="2" fill="#2aa03a"/></svg><svg class="abs" style="left:332px;top:4.5px;width:11px;height:11px" viewBox="0 0 11 11"><rect x="1" y="1" width="9" height="7" rx="1" fill="#3a5ac0" stroke="#1a2a7a" stroke-width=".7"/><rect x="2.5" y="2.5" width="6" height="4" fill="#e8eefc"/><rect x="3.5" y="8.5" width="4" height="1.5" fill="#1a2a7a"/></svg><svg class="abs" style="left:361px;top:4.5px;width:11px;height:11px" viewBox="0 0 11 11"><rect x=".5" y="2.5" width="9" height="8" fill="#fdfdf4" stroke="#6a7a9a" stroke-width=".8"/><rect x=".5" y="2.5" width="9" height="2" fill="#8aa0d0"/><path d="M8.5 0l.7 1.400 1.5.2-1.100 1 .3 1.5-1.400-.7-1.300.7.300-1.5-1.100-1 1.5-.2z" fill="#f4c430" stroke="#b8860b" stroke-width=".4"/></svg><i class="dd" style="left:348.5px;top:9px"></i><i class="dd" style="left:378.5px;top:9px"></i>
  <div class="tabtxt" style="left:179px">Properties</div>
  <div class="tabtxt" style="left:242px">SDK Terminal</div>
  <div class="mini" style="left:394px;top:6px;background:#555"></div>
  <div class="maxi" style="left:411px;top:7px"></div>
  <div class="body" style="top:21px">
    <div class="t" style="left:1px;top:0;letter-spacing:-.19px">TCF Debug Virtual Terminal - Cortex-A53 #3</div>
    <div class="abs" style="left:0;top:11px;width:420px;height:1px;background:#ececec"></div>
    <div class="abs" style="left:420px;top:11px;width:10px;height:128px;background:#f4f4f3;border-left:1px solid #e2e2e1"></div>
    <svg class="abs" style="left:422.5px;top:15px;width:5px;height:4px" viewBox="0 0 5 4"><path d="M.5 3.5l2-2.5 2 2.5" fill="none" stroke="#9a9a9a" stroke-width=".9"/></svg>
    <svg class="abs" style="left:422.5px;top:131px;width:5px;height:4px" viewBox="0 0 5 4"><path d="M.5 .5l2 2.5 2-2.5" fill="none" stroke="#9a9a9a" stroke-width=".9"/></svg>
    <div class="sb" style="left:421.5px;top:21px;width:7.5px;height:107px;background:#fdfdfd"></div>
  </div>
</div>

<!-- SDK Log -->
<div class="panel" id="sl" style="left:767px;top:527px;width:431px;height:162px">
  <div class="hdr"></div>
  <div class="tab" style="left:0;width:66px"></div>
  <div class="tabtxt act" style="left:14.5px;font-size:9.2px;letter-spacing:-.55px">SDK Log</div>
  <svg class="abs" style="left:54px;top:6.7px;width:7px;height:7px" viewBox="0 0 8 8"><path d="M1.300 .5l2.700 2.200 2.700-2.200.8.800-2.200 2.700 2.200 2.700-.8.800-2.700-2.200-2.700 2.200-.8-.8 2.200-2.700-2.200-2.700z" fill="#f4f4f4" stroke="#3c3c3c" stroke-width=".8"/></svg><svg class="abs" style="left:3px;top:4.5px;width:11px;height:11px" viewBox="0 0 11 11"><rect x="1" y=".5" width="8" height="10" fill="#fafafa" stroke="#5a7ab8" stroke-width=".8"/><path d="M2.5 3h5M2.5 5h5M2.5 7h3" stroke="#c8a0a0" stroke-width=".7"/></svg><svg class="abs" style="left:357px;top:4.5px;width:11px;height:11px" viewBox="0 0 11 11"><rect x="1" y=".5" width="8" height="10" fill="#fafafa" stroke="#5a7ab8" stroke-width=".8"/><path d="M2.5 3h5M2.5 5h5M2.5 7h3" stroke="#c8a0a0" stroke-width=".7"/><circle cx="8" cy="8.5" r="2.300" fill="#d8282a"/><path d="M6.800 8.5h2.400" stroke="#fff" stroke-width=".8"/></svg><svg class="abs" style="left:374px;top:4.5px;width:11px;height:11px" viewBox="0 0 11 11"><rect x="1" y=".5" width="8" height="10" fill="#fafafa" stroke="#5a7ab8" stroke-width=".8"/><path d="M2.5 3h5M2.5 5h5M2.5 7h3" stroke="#c8a0a0" stroke-width=".7"/><circle cx="8" cy="8.5" r="2.300" fill="#5a5a5a"/></svg>
  <div class="mini" style="left:394px;top:6px;background:#555"></div>
  <div class="maxi" style="left:412px;top:7px"></div>
  <div class="body" style="top:21px;background:#e9e9e8">
    <div class="abs" style="left:4px;top:3px;width:413px;height:122px;background:#fff"></div>
    <div class="log" style="top:4px">configparams force-mem-access 0
----------------End of Script----------------

12:58:06 INFO   : Context for processor 'psu_cortexa53_0' is selected.
12:58:06 INFO   : 'con' command is executed.
12:58:06 INFO   : ----------------XSDB Script (After Launch)----------------
targets -set -nocase -filter {name =~"*A53*0" &amp;&amp; jtag_cable_name =~ "Avnet USB-to-
con
----------------End of Script----------------

12:58:06 INFO   : Launch script is exported to file '/home/buffteethr/AvnetTTC/MPS</div>
    <div class="abs" style="left:417px;top:3px;width:10px;height:122px;background:linear-gradient(90deg,#d9d9d8,#e6e6e5 50%,#ececeb);border-left:1px solid #d2d2d1"></div>
    <svg class="abs" style="left:419.5px;top:6px;width:5px;height:4px" viewBox="0 0 5 4"><path d="M.5 3.5l2-2.5 2 2.5z" fill="#8a8a8a"/></svg>
    <div class="sb" style="left:418px;top:97.5px;width:8px;height:18.5px;background:linear-gradient(90deg,#ececec,#fdfdfd 45%,#f4f4f4);border-color:#c4c4c3"></div>
    <div class="abs" style="left:418px;top:116px;width:8px;height:9px;background:#f4f4f3;border:1px solid #cfcfce;border-top:0;border-radius:0 0 4px 4px"></div>
    <svg class="abs" style="left:419.5px;top:118.5px;width:5px;height:4px" viewBox="0 0 5 4"><path d="M.5 .5l2 2.5 2-2.5z" fill="#8a8a8a"/></svg>
    <div class="abs" style="left:4px;top:125px;width:413px;height:9px;background:#ececeb;border-top:1px solid #d8d8d7"></div>
    <div class="abs" style="left:150px;top:126.5px;width:256px;height:7.5px;background:linear-gradient(#e0e0df,#e9e9e8);border-radius:0 4px 4px 0"></div>
    <svg class="abs" style="left:4.5px;top:128px;width:4px;height:5px" viewBox="0 0 4 5"><path d="M3.5 .5l-2.5 2 2.5 2z" fill="#a0a0a0"/></svg>
    <svg class="abs" style="left:410px;top:128px;width:4px;height:5px" viewBox="0 0 4 5"><path d="M.5 .5l2.5 2-2.5 2z" fill="#6a6a6a"/></svg>
    <div class="sb" style="left:11px;top:126.5px;width:136px;height:7.5px;background:#fcfcfc;border-color:#c8c8c7"></div>
  </div>
</div>

<!-- status bar -->
<div class="abs" style="left:1000px;top:694px;width:0;height:12px;border-left:1px dotted #9a9a99"></div>

<!-- GtkTerm -->
<div id="gt">
  <div class="tb"></div>
  <div class="wb" style="left:4.5px;background:radial-gradient(circle at 50% 35%,#f58a5c,#df4f1c);border:1px solid #7a3216"><svg class="abs" style="left:1.5px;top:1.5px;width:5px;height:5px" viewBox="0 0 5 5"><path d="M.8 .8l3.4 3.4M4.2 .8l-3.4 3.4" stroke="#5a2410" stroke-width="1"/></svg></div>
  <div class="wb" style="left:16.5px;background:linear-gradient(#8c8a83,#6f6d67);border:1px solid #45443f"><svg class="abs" style="left:1.5px;top:1.5px;width:5px;height:5px" viewBox="0 0 5 5"><path d="M.5 2.5h4" stroke="#3c3b37" stroke-width="1"/></svg></div>
  <div class="wb" style="left:28.5px;background:linear-gradient(#8c8a83,#6f6d67);border:1px solid #45443f"><svg class="abs" style="left:1.5px;top:1.5px;width:5px;height:5px" viewBox="0 0 5 5"><rect x=".7" y=".7" width="3.6" height="3.6" fill="none" stroke="#3c3b37" stroke-width=".9"/></svg></div>
  <div class="tt">GtkTerm - /dev/ttyUSB1  115200-8-N-1</div>
  <pre>Hello World
--Starting Memory Test Application--
NOTE: This application runs with D-Cache disabled.As a result, cache
line requests will not be generated
Testing memory region: psu_ddr_0_MEM_0
    Memory Controller: psu_ddr_0
         Base Address: 0x50
                 Size: 0x7FEFFFB0 bytes
          32-bit test: PASSED!
          16-bit test: PASSED!
           8-bit test: PASSED!
--Memory Test Application Complete--</pre>
  <div class="abs" style="left:1px;top:183px;width:6px;height:13px;background:#9a9a9a"></div>
  <div class="st">
    <span style="left:2px;font-size:9.3px">/dev/ttyUSB1  115200-8-N-1</span>
    <span class="b" style="left:330px;font-size:8.8px;letter-spacing:-.3px">DTR</span>
    <span class="b" style="left:355px;font-size:8.8px;letter-spacing:-.3px">RTS</span>
    <span style="left:378px;color:#b9b7b3;font-size:8.6px;letter-spacing:-.3px">CTS</span>
    <span style="left:401px;color:#b9b7b3;font-size:8.6px;letter-spacing:-.3px">CD</span>
    <span style="left:421.5px;color:#b9b7b3;font-size:8.6px;letter-spacing:-.3px">DSR</span>
    <span style="left:446px;color:#b9b7b3;font-size:8.6px;letter-spacing:-.3px">RI</span>
    <svg class="abs" style="right:1px;bottom:1px;width:6px;height:6px" viewBox="0 0 6 6"><path d="M5.5 .5v1M5.5 2.5v1M5.5 4.5v1M3.5 2.5v1M3.5 4.5v1M1.5 4.5v1" stroke="#c9c7c3" stroke-width="1"/></svg>
  </div>
</div>
</body>
</html>
